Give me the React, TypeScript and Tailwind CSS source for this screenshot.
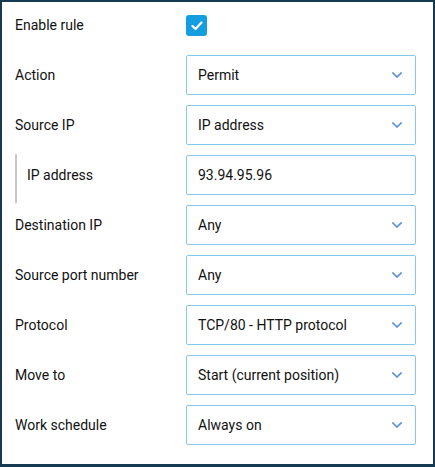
import React from 'react';

const Chevron = () => (
  <svg width="10" height="6" viewBox="0 0 10 6" fill="none" className="text-[#5a8fd8]">
    <path d="M1 1l4 4 4-4" stroke="currentColor" strokeWidth="1.6" strokeLinecap="square" />
  </svg>
);

function Select({ value }: { value: string }) {
  return (
    <div className="w-[230px] h-10 border border-[#86c8ea] rounded-[2px] flex items-center justify-between pl-[11px] pr-[13px] text-[14px] text-[#111]">
      <span>{value}</span>
      <Chevron />
    </div>
  );
}

function Input({ value }: { value: string }) {
  return (
    <div className="w-[230px] h-10 border border-[#86c8ea] rounded-[2px] flex items-center pl-[11px] text-[14px] text-[#111]">
      {value}
    </div>
  );
}

const rows: { label: string; value: string; kind: 'select' | 'input'; sub?: boolean }[] = [
  { label: 'Action', value: 'Permit', kind: 'select' },
  { label: 'Source IP', value: 'IP address', kind: 'select' },
  { label: 'IP address', value: '93.94.95.96', kind: 'input', sub: true },
  { label: 'Destination IP', value: 'Any', kind: 'select' },
  { label: 'Source port number', value: 'Any', kind: 'select' },
  { label: 'Protocol', value: 'TCP/80 - HTTP protocol', kind: 'select' },
  { label: 'Move to', value: 'Start (current position)', kind: 'select' },
  { label: 'Work schedule', value: 'Always on', kind: 'select' },
];

export default function App() {
  return (
    <div
      className="w-[435px] h-[467px] bg-white border-2 border-b-[3px] border-[#163a52] pl-[13px] pt-[13px]"
      style={{ fontFamily: 'Roboto, "Liberation Sans", sans-serif' }}
    >
      <div className="flex items-center h-[21px] mb-[19px]">
        <span className="w-[171px] text-[14px] text-[#111]">Enable rule</span>
        <span className="w-[21px] h-[21px] rounded-[3px] bg-[#149ddf] flex items-center justify-center">
          <svg width="12" height="10" viewBox="0 0 12 10" fill="none">
            <path d="M1.5 5l3 3 6-6.5" stroke="white" strokeWidth="2.2" strokeLinecap="round" strokeLinejoin="round" />
          </svg>
        </span>
      </div>
      <div className="flex flex-col gap-[10px]">
        {rows.map((r) =>
          r.sub ? (
            <div key={r.label} className="flex items-center h-10 relative">
              <div className="absolute left-0 top-[-1px] h-[49px] w-[2px] bg-[#c8c8c8]" />
              <span className="w-[171px] pl-3 text-[14px] text-[#111]">{r.label}</span>
              <Input value={r.value} />
            </div>
          ) : (
            <div key={r.label} className="flex items-center h-10">
              <span className="w-[171px] text-[14px] text-[#111]">{r.label}</span>
              {r.kind === 'select' ? <Select value={r.value} /> : <Input value={r.value} />}
            </div>
          )
        )}
      </div>
    </div>
  );
}
